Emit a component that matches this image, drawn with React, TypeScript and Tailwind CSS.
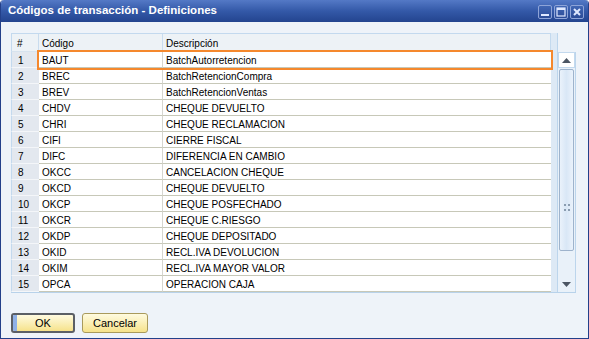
import React from 'react';

const rows: [string, string][] = [
  ['BAUT', 'BatchAutorretencion'],
  ['BREC', 'BatchRetencionCompra'],
  ['BREV', 'BatchRetencionVentas'],
  ['CHDV', 'CHEQUE DEVUELTO'],
  ['CHRI', 'CHEQUE RECLAMACION'],
  ['CIFI', 'CIERRE FISCAL'],
  ['DIFC', 'DIFERENCIA EN CAMBIO'],
  ['OKCC', 'CANCELACION CHEQUE'],
  ['OKCD', 'CHEQUE DEVUELTO'],
  ['OKCP', 'CHEQUE POSFECHADO'],
  ['OKCR', 'CHEQUE C.RIESGO'],
  ['OKDP', 'CHEQUE DEPOSITADO'],
  ['OKID', 'RECL.IVA DEVOLUCION'],
  ['OKIM', 'RECL.IVA MAYOR VALOR'],
  ['OPCA', 'OPERACION CAJA'],
];

const TitleButton: React.FC<{ kind: 'min' | 'max' | 'close' }> = ({ kind }) => (
  <div className="w-[14px] h-[14px] rounded-[2px] border border-[#8ea4d8] bg-gradient-to-b from-[#4166b4] to-[#2c4c98] flex items-center justify-center">
    <svg width="10" height="10" viewBox="0 0 10 10">
      {kind === 'min' && <rect x="1" y="7" width="8" height="2" fill="#dfe8ff" />}
      {kind === 'max' && (
        <rect x="1" y="1" width="8" height="8" fill="none" stroke="#dfe8ff" strokeWidth="1.2" />
      )}
      {kind === 'max' && <rect x="1" y="1" width="8" height="2" fill="#dfe8ff" />}
      {kind === 'close' && (
        <path d="M2 2 L8 8 M8 2 L2 8" stroke="#dfe8ff" strokeWidth="2" />
      )}
    </svg>
  </div>
);

const App: React.FC = () => {
  return (
    <div
      className="w-[589px] h-[339px] flex flex-col bg-[#eef3f9] border-x border-b border-[#23408a] rounded-t-[4px] overflow-hidden"
      style={{ fontFamily: '"Liberation Sans", Arial, sans-serif' }}
    >
      {/* title bar */}
      <div className="h-[22px] flex items-center justify-between pl-[7px] pr-[4px] bg-gradient-to-b from-[#5479c6] via-[#3459a8] to-[#23448f]">
        <span className="text-white font-bold text-[11.5px]">Códigos de transacción - Definiciones</span>
        <div className="flex gap-[2px] mt-[1px]">
          <TitleButton kind="min" />
          <TitleButton kind="max" />
          <TitleButton kind="close" />
        </div>
      </div>

      {/* grid area */}
      <div className="pl-[10px] pt-[11px] flex">
        <div className="flex border-b border-[#b8d2ea]">
          <div className="relative w-[540px] text-[10px] text-black">
            <div className="h-[19px] flex bg-[#edf2f6] border border-[#c3d9ee] border-b-[#d7e3ee]">
              <div className="w-[27px] pl-[5px] pt-[1px] flex items-center border-r border-[#c9dcee]">#</div>
              <div className="w-[124px] pl-[3px] pt-[1px] flex items-center border-r border-[#c9dcee]">Código</div>
              <div className="flex-1 pl-[3px] pt-[1px] flex items-center">Descripción</div>
            </div>
            {rows.map(([code, desc], i) => (
              <div key={code} className="h-[16px] flex">
                <div className="w-[28px] pl-[6px] pt-[2px] flex items-center bg-[#e3e8ef] border-l border-[#c3d9ee] border-b border-b-[#f4f6f9]">
                  {i + 1}
                </div>
                <div className="w-[124px] pl-[3px] pt-[2px] flex items-center bg-white border-b border-[#c7c8b8] border-r border-r-[#d6d6d0]">
                  {code}
                </div>
                <div className="flex-1 pl-[3px] pt-[2px] flex items-center bg-white border-b border-[#c7c8b8]">
                  {desc}
                </div>
              </div>
            ))}
            <div className="absolute left-[26px] top-[17px] w-[516px] h-[20px] border-2 border-[#f5882d]" />
          </div>
          <div className="w-[7px] bg-[#dde9f5] border-r border-[#bcd5ec]" />
          {/* scrollbar */}
          <div className="w-[18px] flex flex-col">
            <div className="h-[19px]" />
            <div className="flex-1 flex flex-col bg-[#e9f1f9] border-r border-[#bcd5ec]">
              <div className="h-[16px] bg-white border border-[#c3d9ee] flex items-center justify-center">
                <svg width="9" height="5" viewBox="0 0 9 5"><path d="M0 5 L4.5 0 L9 5 Z" fill="#4b5563" /></svg>
              </div>
              <div className="mx-[1px] mt-[1px] h-[182px] rounded-[2px] border border-[#9eb3cc] bg-gradient-to-r from-[#eaf2fb] via-[#d9e7f6] to-[#eaf2fb] flex items-center justify-center">
                <svg width="6" height="7" viewBox="0 0 6 7" className="mt-[94px]">
                  <rect x="0" y="0" width="2" height="2" fill="#8a9cb0" />
                  <rect x="4" y="0" width="2" height="2" fill="#8a9cb0" />
                  <rect x="0" y="5" width="2" height="2" fill="#8a9cb0" />
                  <rect x="4" y="5" width="2" height="2" fill="#8a9cb0" />
                </svg>
              </div>
              <div className="flex-1" />
              <div className="h-[16px] flex items-center justify-center">
                <svg width="9" height="5" viewBox="0 0 9 5"><path d="M0 0 L9 0 L4.5 5 Z" fill="#4b5563" /></svg>
              </div>
            </div>
          </div>
        </div>
      </div>

      {/* buttons */}
      <div className="pl-[10px] pt-[20px] flex gap-[7px] text-[11px]">
        <button className="relative w-[64px] h-[20px] rounded-[3px] border-2 border-[#5b5f66] bg-gradient-to-b from-[#fffbe0] to-[#f6e28a] overflow-hidden">
          <span className="absolute left-0 top-0 bottom-0 w-[4px] bg-[#8fb0e6]" />
          OK
        </button>
        <button className="w-[66px] h-[20px] rounded-[3px] border border-[#a99a5c] bg-gradient-to-b from-[#fffbe0] to-[#f6e28a]">
          Cancelar
        </button>
      </div>
    </div>
  );
};

export default App;
